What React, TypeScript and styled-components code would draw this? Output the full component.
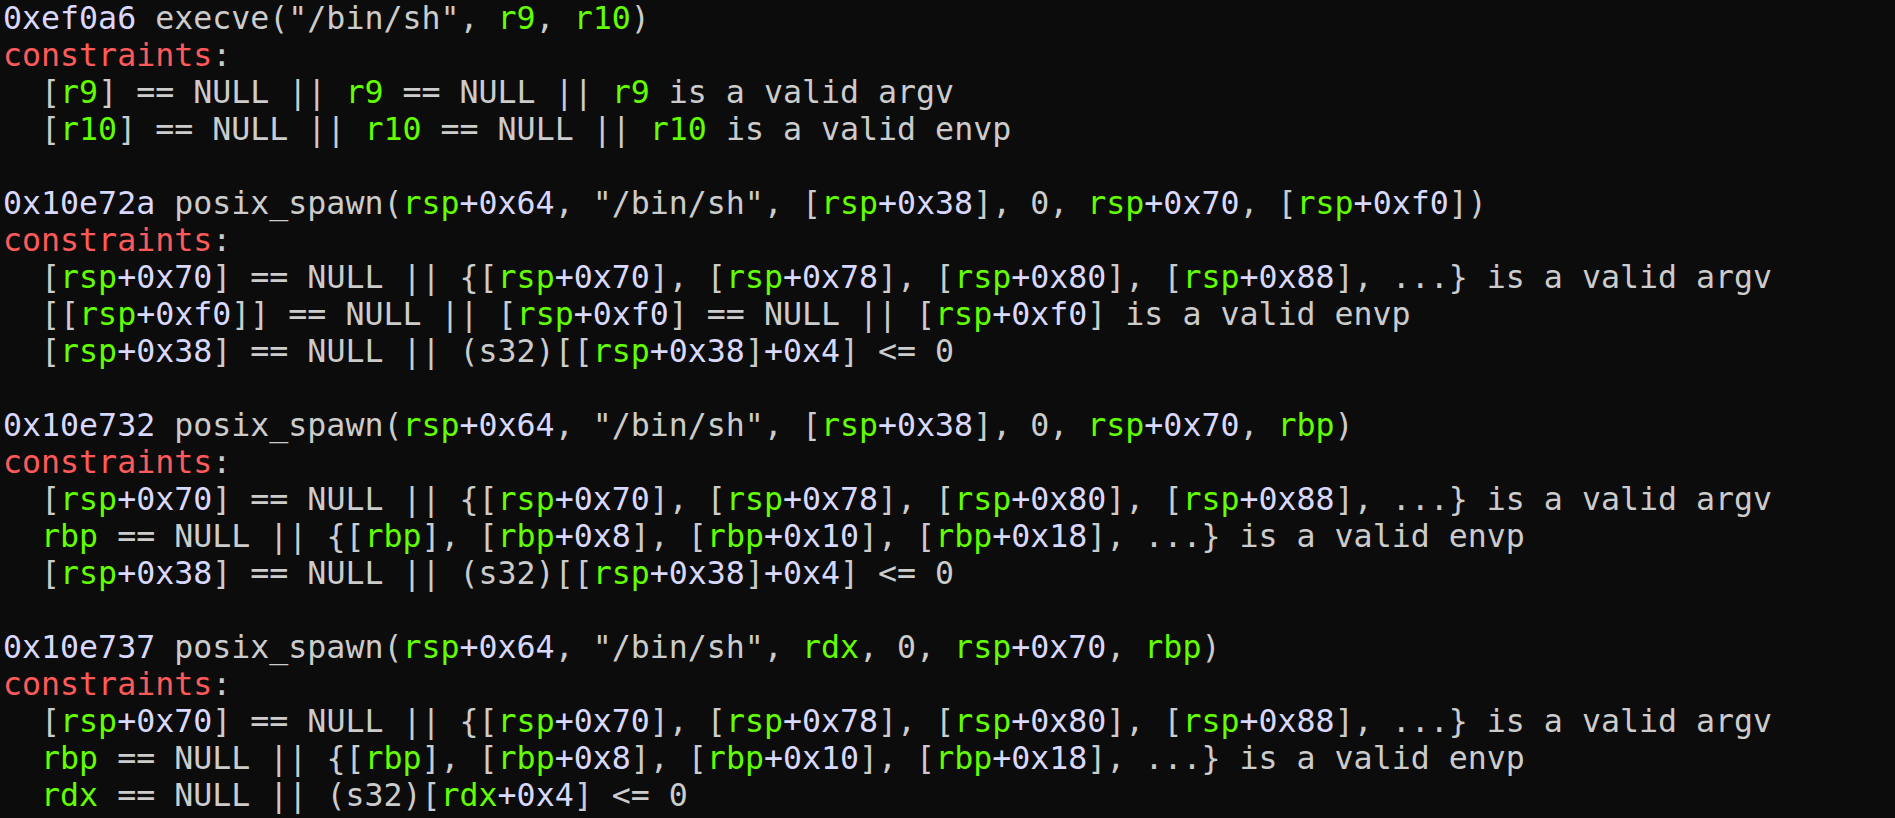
import React from "react";
import styled, { createGlobalStyle } from "styled-components";

const GlobalStyle = createGlobalStyle`
  html, body {
    margin: 0;
    padding: 0;
    background: #0c0c0c;
    overflow: hidden;
  }
  #root {
    height: 818px;
  }
`;

const Terminal = styled.div`
  width: 1895px;
  height: 818px;
  background: #0c0c0c;
  overflow: hidden;
  box-sizing: border-box;
  padding: 0 0 0 3px;
  font-family: "DejaVu Sans Mono", "Liberation Mono", monospace;
  font-size: 31.6px;
  color: #cccccc;
`;

const Output = styled.div`
  display: flex;
  flex-direction: column;
`;

const Line = styled.div`
  height: 37px;
  line-height: 36px;
  white-space: pre;
`;

type Kind = "plain" | "addr" | "reg" | "warn";

const colors: Record<Kind, string> = {
  plain: "#cccccc",
  addr: "#d9d9ff",
  reg: "#62ff00",
  warn: "#ff5a5a",
};

const Token = styled.span<{ $kind: Kind }>`
  color: ${(p) => colors[p.$kind]};
`;

const lines: string[] = [
  '0xef0a6 execve("/bin/sh", r9, r10)',
  "constraints:",
  "  [r9] == NULL || r9 == NULL || r9 is a valid argv",
  "  [r10] == NULL || r10 == NULL || r10 is a valid envp",
  "",
  '0x10e72a posix_spawn(rsp+0x64, "/bin/sh", [rsp+0x38], 0, rsp+0x70, [rsp+0xf0])',
  "constraints:",
  "  [rsp+0x70] == NULL || {[rsp+0x70], [rsp+0x78], [rsp+0x80], [rsp+0x88], ...} is a valid argv",
  "  [[rsp+0xf0]] == NULL || [rsp+0xf0] == NULL || [rsp+0xf0] is a valid envp",
  "  [rsp+0x38] == NULL || (s32)[[rsp+0x38]+0x4] <= 0",
  "",
  '0x10e732 posix_spawn(rsp+0x64, "/bin/sh", [rsp+0x38], 0, rsp+0x70, rbp)',
  "constraints:",
  "  [rsp+0x70] == NULL || {[rsp+0x70], [rsp+0x78], [rsp+0x80], [rsp+0x88], ...} is a valid argv",
  "  rbp == NULL || {[rbp], [rbp+0x8], [rbp+0x10], [rbp+0x18], ...} is a valid envp",
  "  [rsp+0x38] == NULL || (s32)[[rsp+0x38]+0x4] <= 0",
  "",
  '0x10e737 posix_spawn(rsp+0x64, "/bin/sh", rdx, 0, rsp+0x70, rbp)',
  "constraints:",
  "  [rsp+0x70] == NULL || {[rsp+0x70], [rsp+0x78], [rsp+0x80], [rsp+0x88], ...} is a valid argv",
  "  rbp == NULL || {[rbp], [rbp+0x8], [rbp+0x10], [rbp+0x18], ...} is a valid envp",
  "  rdx == NULL || (s32)[rdx+0x4] <= 0",
];

const pattern = /(^0x[0-9a-f]+)|(\+0x[0-9a-f]+)|\b(r9|r10|rsp|rbp|rdx)\b|(constraints)/g;

function tokenize(text: string): { kind: Kind; text: string }[] {
  const out: { kind: Kind; text: string }[] = [];
  let last = 0;
  let m: RegExpExecArray | null;
  pattern.lastIndex = 0;
  while ((m = pattern.exec(text)) !== null) {
    if (m.index > last) out.push({ kind: "plain", text: text.slice(last, m.index) });
    let kind: Kind = "plain";
    if (m[1] || m[2]) kind = "addr";
    else if (m[3]) kind = "reg";
    else if (m[4]) kind = "warn";
    out.push({ kind, text: m[0] });
    last = m.index + m[0].length;
  }
  if (last < text.length) out.push({ kind: "plain", text: text.slice(last) });
  return out;
}

export default function App() {
  return (
    <>
      <GlobalStyle />
      <Terminal>
        <Output>
          {lines.map((l, i) => (
            <Line key={i}>
              {l === ""
                ? " "
                : tokenize(l).map((t, j) => (
                    <Token key={j} $kind={t.kind}>
                      {t.text}
                    </Token>
                  ))}
            </Line>
          ))}
        </Output>
      </Terminal>
    </>
  );
}
